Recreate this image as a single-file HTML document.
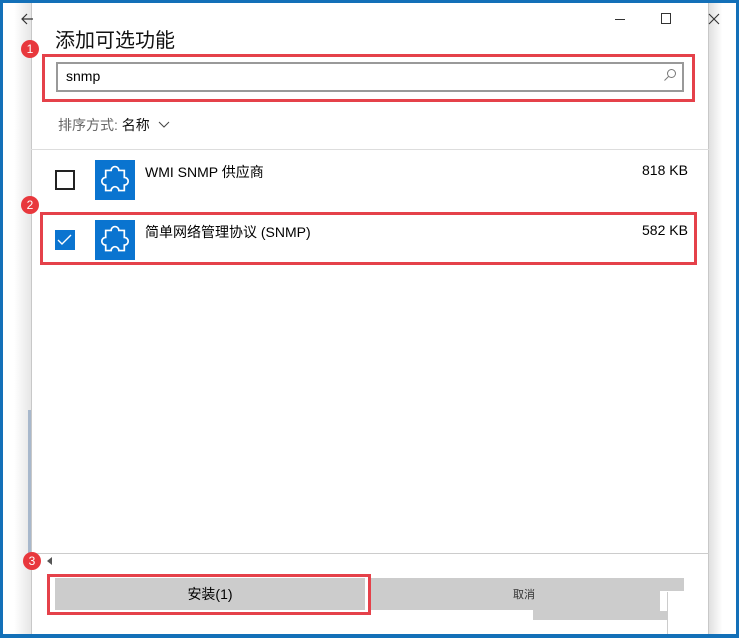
<!DOCTYPE html>
<html><head><meta charset="utf-8"><style>
*{margin:0;padding:0;box-sizing:border-box}
body{width:739px;height:638px;overflow:hidden;background:#fff;position:relative;font-family:"Liberation Sans","Noto Sans CJK SC",sans-serif;color:#000}
.a{position:absolute}
.badge{position:absolute;width:18px;height:18px;border-radius:50%;background:#e8383d;color:#fff;font-size:12px;text-align:center;line-height:18px}
.icon{position:absolute;width:40px;height:40px;background:#0a74d0}
.red{position:absolute;border:3px solid #e5414a}
</style></head><body>
<div class="a" style="left:0;top:0;width:739px;height:638px;border:3px solid #1370b8;border-bottom-width:4px"></div>
<div class="a" style="left:3px;top:3px;width:28px;height:631px;background:linear-gradient(90deg,#fff 40%,#e6e6e6)"></div>
<div class="a" style="left:28px;top:410px;width:3px;height:150px;background:#a8b8cc"></div>
<div class="a" style="left:709px;top:3px;width:27px;height:631px;background:linear-gradient(90deg,#e0e0e0,#fff 50%)"></div>
<div class="a" style="left:31px;top:3px;width:678px;height:631px;background:#fff;border-left:1px solid #c8c8c8;border-right:1px solid #c8c8c8"></div>
<svg class="a" style="left:20px;top:12px" width="14" height="14"><path d="M13 7H2M7 2L2 7l5 5" stroke="#333" fill="none" stroke-width="1.2"/></svg>
<div class="a" style="left:615px;top:19px;width:10px;height:1px;background:#333"></div>
<div class="a" style="left:661px;top:13px;width:10px;height:11px;border:1px solid #333"></div>
<svg class="a" style="left:708px;top:13px" width="12" height="12"><path d="M1 1l10 10M11 1L1 11" stroke="#333" stroke-width="1.1"/></svg>
<div class="a" style="left:55px;top:24px;font-size:20px;color:#111">添加可选功能</div>
<div class="badge" style="left:21px;top:40px">1</div>
<div class="red" style="left:42px;top:54px;width:653px;height:48px"></div>
<div class="a" style="left:56px;top:62px;width:628px;height:30px;border:2px solid #999"></div>
<div class="a" style="left:66px;top:68px;font-size:14px">snmp</div>
<svg class="a" style="left:663px;top:68px" width="14" height="14"><circle cx="8.5" cy="5.5" r="4" stroke="#777" fill="none"/><path d="M5.5 8.5L1.5 12.5" stroke="#777"/></svg>
<div class="a" style="left:58px;top:115px;font-size:14px;color:#666">排序方式: <span style="color:#111">名称</span></div>
<svg class="a" style="left:158px;top:121px" width="12" height="8"><path d="M1 1l5 5 5-5" stroke="#444" fill="none"/></svg>
<div class="a" style="left:31px;top:149px;width:678px;height:1px;background:#ddd"></div>
<div class="a" style="left:55px;top:170px;width:20px;height:20px;border:2px solid #222"></div>
<div class="icon" style="left:95px;top:160px"><svg width="40" height="40" viewBox="0 0 40 40"><g transform="translate(20 20.5) scale(1.55) translate(-20 -20.5)"><path d="M14 14h3.5a2.5 2.5 0 0 1 5 0H26v4.5a2.5 2.5 0 0 1 0 5V27h-3.5a2.5 2.5 0 0 0-5 0H14v-3.5a2.5 2.5 0 0 1 0-5z" stroke="#fff" stroke-width="1.1" fill="none"/></g></svg></div>
<div class="a" style="left:145px;top:162px;font-size:14px">WMI SNMP 供应商</div>
<div class="a" style="left:642px;top:162px;font-size:14px">818 KB</div>
<div class="badge" style="left:21px;top:196px">2</div>
<div class="red" style="left:40px;top:212px;width:657px;height:53px"></div>
<div class="a" style="left:55px;top:230px;width:20px;height:20px;background:#0a74d0"><svg width="20" height="20"><path d="M3 10l4 4 9-9" stroke="#fff" stroke-width="1.4" fill="none"/></svg></div>
<div class="icon" style="left:95px;top:220px"><svg width="40" height="40" viewBox="0 0 40 40"><g transform="translate(20 20.5) scale(1.55) translate(-20 -20.5)"><path d="M14 14h3.5a2.5 2.5 0 0 1 5 0H26v4.5a2.5 2.5 0 0 1 0 5V27h-3.5a2.5 2.5 0 0 0-5 0H14v-3.5a2.5 2.5 0 0 1 0-5z" stroke="#fff" stroke-width="1.1" fill="none"/></g></svg></div>
<div class="a" style="left:145px;top:222px;font-size:14px">简单网络管理协议 (SNMP)</div>
<div class="a" style="left:642px;top:222px;font-size:14px">582 KB</div>
<div class="a" style="left:31px;top:553px;width:678px;height:1px;background:#ccc"></div>
<div class="badge" style="left:23px;top:552px">3</div>
<svg class="a" style="left:47px;top:557px" width="6" height="8"><path d="M5 0L0 4l5 4z" fill="#555"/></svg>
<div class="a" style="left:370px;top:578px;width:314px;height:32px;background:#ccc"></div>
<div class="a" style="left:533px;top:610px;width:135px;height:10px;background:#ccc"></div>
<div class="a" style="left:660px;top:591px;width:30px;height:20px;background:#fff"></div>
<div class="a" style="left:667px;top:592px;width:1px;height:42px;background:#ccc"></div>
<div class="a" style="left:513px;top:586px;font-size:11px;color:#333">取消</div>
<div class="red" style="left:47px;top:574px;width:324px;height:41px"></div>
<div class="a" style="left:55px;top:578px;width:310px;height:32px;background:#ccc;text-align:center;line-height:32px;font-size:14px">安装(1)</div>
</body></html>
